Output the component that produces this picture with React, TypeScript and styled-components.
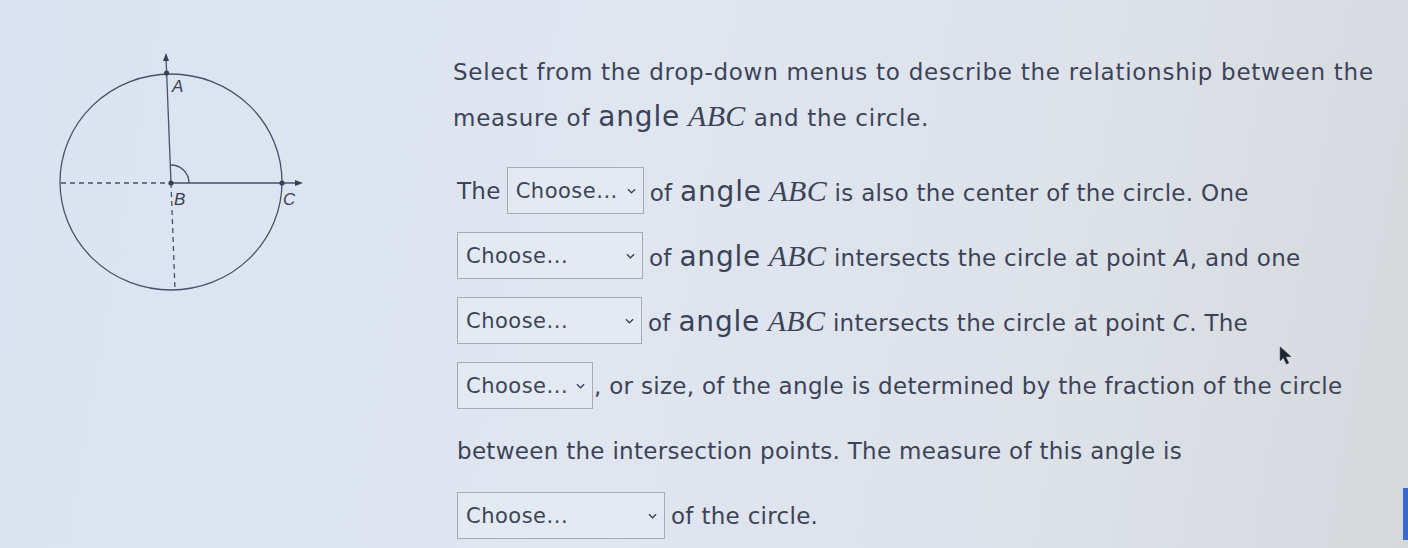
import styled, { createGlobalStyle } from "styled-components";

const GlobalStyle = createGlobalStyle`
  html, body {
    margin: 0;
    padding: 0;
  }
  body {
    width: 1408px;
    height: 548px;
    overflow: hidden;
    font-family: "DejaVu Sans", "Open Sans", sans-serif;
    color: #3c4358;
    background: linear-gradient(100deg, #dae3f1 0%, #dfe6f0 45%, #dde2e9 75%, #d5d9dc 100%);
  }
`;

// 원과 각 ABC 그림
const Diagram = () => (
  <svg width="300" height="280" viewBox="0 0 300 280">
    <g stroke="#4a5068" strokeWidth="1.3" fill="none">
      <ellipse cx="131" cy="142" rx="111" ry="108" />
      <line x1="131" y1="143" x2="126" y2="17" />
      <line x1="131" y1="143" x2="260" y2="143" />
      <line x1="21" y1="143" x2="131" y2="143" strokeDasharray="5 4" />
      <line x1="131" y1="143" x2="135" y2="250" strokeDasharray="5 4" />
      <path d="M 130.3 125 A 18 18 0 0 1 149 143" />
    </g>
    <g fill="#3a4056">
      <circle cx="131" cy="143" r="2.6" />
      <circle cx="126.6" cy="33" r="2.6" />
      <circle cx="242" cy="143" r="2.6" />
      <path d="M 126 13 L 123 21 L 129 21 Z" />
      <path d="M 263 143 L 255 140 L 255 146 Z" />
    </g>
    <g fontFamily="'Liberation Sans', Arial, sans-serif" fontSize="17" fontStyle="italic" fill="#3a4056">
      <text x="132" y="52">A</text>
      <text x="134" y="165">B</text>
      <text x="243" y="165">C</text>
    </g>
  </svg>
);

const Select = ({ width }: { width: number }) => (
  <SelectBox $width={width}>
    <span>Choose...</span>
    <Chevron viewBox="0 0 10 6" width="9" height="6">
      <path d="M1 1 L5 5 L9 1" stroke="#3a4056" strokeWidth="1.4" fill="none" />
    </Chevron>
  </SelectBox>
);

const Angle = () => (
  <>
    <Big>angle</Big> <Math>ABC</Math>
  </>
);

const App = () => {
  return (
    <>
      <GlobalStyle />
      <Page>
        <Figure>
          <Diagram />
        </Figure>
        <Content>
          <Intro>
            Select from the drop-down menus to describe the relationship between the
            <br />
            measure of <Angle /> and the circle.
          </Intro>
          <Rows>
            <Row>
              <span>The</span>
              <Select width={137} />
              <span>
                of <Angle /> is also the center of the circle. One
              </span>
            </Row>
            <Row>
              <Select width={186} />
              <span>
                of <Angle /> intersects the circle at point <i>A</i>, and one
              </span>
            </Row>
            <Row>
              <Select width={185} />
              <span>
                of <Angle /> intersects the circle at point <i>C</i>. The
              </span>
            </Row>
            <Row $tight>
              <Select width={136} />
              <span>, or size, of the angle is determined by the fraction of the circle</span>
            </Row>
            <Row>
              <span>between the intersection points. The measure of this angle is</span>
            </Row>
            <Row>
              <Select width={208} />
              <span>of the circle.</span>
            </Row>
          </Rows>
        </Content>
        <Cursor viewBox="0 0 12 18" width="13" height="19">
          <path d="M1 1 L1 14 L4 11 L7 17 L9 16 L6 10 L11 10 Z" fill="#1f2433" stroke="#1f2433" strokeWidth="0.6" />
        </Cursor>
        <EdgeBar />
      </Page>
    </>
  );
};

const Page = styled.div`
  position: relative;
  display: flex;
  width: 1408px;
  height: 548px;
`;
const Figure = styled.div`
  flex: none;
  width: 413px;
  padding: 40px 0 0 40px;
`;
const Content = styled.div`
  flex: 1;
  padding-top: 50px;
  font-size: 23px;
  letter-spacing: 0.75px;
`;
const Intro = styled.p`
  margin: 0;
  line-height: 44px;
`;
const Rows = styled.div`
  margin-top: 18px;
  display: flex;
  flex-direction: column;
  padding-left: 4px;
  letter-spacing: 0.3px;
`;
const Row = styled.div<{ $tight?: boolean }>`
  display: flex;
  align-items: center;
  gap: ${(p) => (p.$tight ? "1px" : "6px")};
  height: 65px;
  white-space: pre;
`;
const SelectBox = styled.div<{ $width: number }>`
  box-sizing: border-box;
  display: flex;
  align-items: center;
  justify-content: space-between;
  width: ${(p) => p.$width}px;
  height: 47px;
  padding: 0 7px 0 8px;
  border: 1px solid #a3abb6;
  background: rgba(235, 240, 246, 0.35);
  font-size: 21px;
  letter-spacing: 0.5px;
  color: #3d4458;
`;
const Chevron = styled.svg`
  flex: none;
`;
const Big = styled.span`
  font-size: 28px;
  letter-spacing: 0.8px;
`;
const Math = styled.span`
  font-family: "Liberation Serif", "Times New Roman", serif;
  font-style: italic;
  font-size: 30px;
  letter-spacing: 0.3px;
`;
const Cursor = styled.svg`
  position: absolute;
  left: 1279px;
  top: 346px;
`;
const EdgeBar = styled.div`
  position: absolute;
  right: 0;
  top: 488px;
  width: 5px;
  height: 52px;
  background: #3b6cc9;
`;

export default App;
